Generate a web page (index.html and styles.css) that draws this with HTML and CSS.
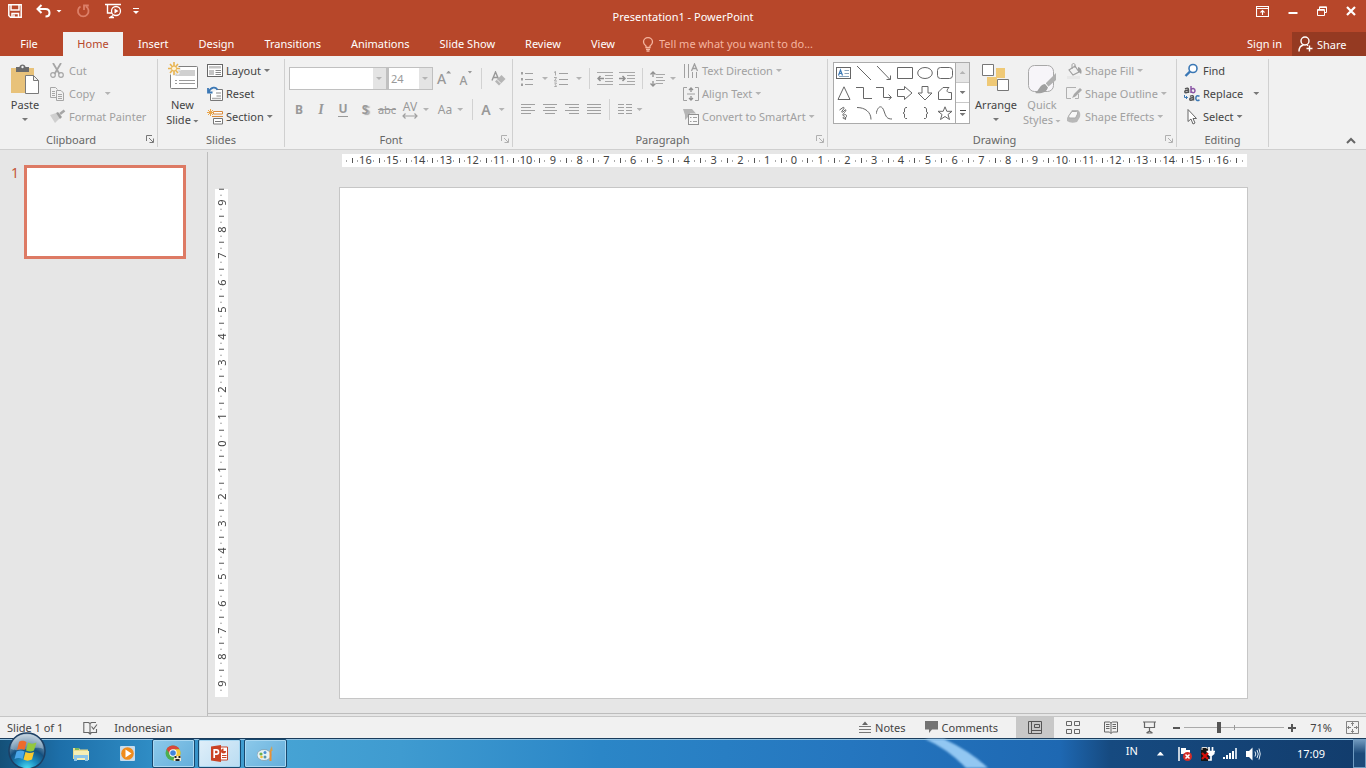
FILE: index.html
```html
<!DOCTYPE html>
<html lang="en">
<head>
<meta charset="utf-8">
<title>Presentation1 - PowerPoint</title>
<link rel="stylesheet" href="styles.css">
</head>
<body>
<div class="app">
<header class="top">
  <div class="titlebar">
    <div class="quick">
      <button class="qa save" aria-label="Save"><svg width="14" height="14" viewBox="0 0 14 14"><path d="M.8 .8H13.2V13.2H2.5L.8 11.5ZM3 1V6H11V1M4 13V9.5H10.500V13M6 10.500V13" fill="none" stroke="#fff" stroke-width="1.500"/></svg></button>
      <button class="qa undo" aria-label="Undo"><svg width="15" height="14" viewBox="0 0 15 14"><path d="M5.500 1L1.500 5L5.500 9M2 5H9.500C12.500 5 13.500 7 13.500 9C13.500 11 12 12.500 9.500 12.500" fill="none" stroke="#fff" stroke-width="2"/></svg><i class="caret"></i></button>
      <button class="qa redo" aria-label="Repeat" disabled><svg width="14" height="14" viewBox="0 0 14 14"><path d="M4.500 2.500A5.300 5.300 0 1 0 10 2.500M8 6V1.500H12.800" fill="none" stroke="#dc7f68" stroke-width="1.800"/></svg></button>
      <button class="qa" aria-label="Start from beginning"><svg width="17" height="16" viewBox="0 0 17 16"><path d="M0 1.500H16M2.500 2V10H7M4 15L8 12.500M5 14.500H9" fill="none" stroke="#fff" stroke-width="1.400"/><circle cx="11" cy="8" r="4.500" fill="#b7472a" stroke="#fff" stroke-width="1.300"/><path d="M9.500 5.500L13.500 8L9.500 10.500Z" fill="#fff"/></svg></button>
      <button class="qa more" aria-label="Customize Quick Access Toolbar"><i class="bar"></i><i class="caret"></i></button>
    </div>
    <h1 class="title">Presentation1 - PowerPoint</h1>
    <div class="winbtns">
      <button aria-label="Ribbon display options"><svg width="13" height="11" viewBox="0 0 13 11"><path d="M.5 .5H12.500V10.500H.5ZM.5 2.500H12.500M6.500 9V4.500M4.500 6.500L6.500 4.500L8.500 6.500" fill="none" stroke="#fff" stroke-width="1.100"/></svg></button>
      <button aria-label="Minimize"><svg width="10" height="11" viewBox="0 0 10 11"><path d="M.5 7H9.500" stroke="#fff" stroke-width="2"/></svg></button>
      <button aria-label="Restore"><svg width="10" height="10" viewBox="0 0 10 10"><path d="M2.500 3V.8H9.500V6.500H7.500M2.500 1.500H9.500M.5 3.500H7.500V9.500H.5ZM.5 4.300H7.500" fill="none" stroke="#fff"/></svg></button>
      <button aria-label="Close"><svg width="10" height="10" viewBox="0 0 10 10"><path d="M1 1L9 9M9 1L1 9" stroke="#fff" stroke-width="2.200"/></svg></button>
    </div>
  </div>
  <nav class="tabs">
    <button class="tab file">File</button>
    <button class="tab active">Home</button>
    <button class="tab">Insert</button>
    <button class="tab">Design</button>
    <button class="tab">Transitions</button>
    <button class="tab">Animations</button>
    <button class="tab">Slide Show</button>
    <button class="tab">Review</button>
    <button class="tab">View</button>
    <label class="tell"><svg width="12" height="15" viewBox="0 0 12 15"><path d="M4 10.500V9C2 7.500 1.500 6.500 1.500 5A4.500 4.300 0 0 1 10.500 5C10.500 6.500 10 7.500 8 9V10.500ZM4 12.300H8M4.500 14H7.500" fill="none" stroke="#f5b5a0" stroke-width="1.300"/></svg><input type="text" placeholder="Tell me what you want to do..."></label>
    <button class="signin">Sign in</button>
    <button class="share"><svg width="15" height="16" viewBox="0 0 15 16"><circle cx="7" cy="5" r="4" fill="none" stroke="#fff" stroke-width="1.400"/><path d="M1 15.500C1 11.500 3 9.500 5.500 9M9 9L10 9.800M11.500 9.500V15.500M8.500 12.500H14.500" fill="none" stroke="#fff" stroke-width="1.400"/></svg>Share</button>
  </nav>
</header>

<section class="ribbon" aria-label="Home ribbon">
  <div class="group g-clip">
    <div class="body">
      <button class="big paste"><svg width="30" height="32" viewBox="0 0 30 32"><path d="M1 4H24V29H1Z" fill="#e8c27a"/><path d="M6 8V3H9.500C9.500 -.5 15.500 -.5 15.500 3H19V8Z" fill="#6b6b6b"/><circle cx="12.500" cy="3" r="1.200" fill="#f1f1f1"/><path d="M15.500 11.500H23.500L28.500 16.500V29.500H15.500ZM23.500 11.500V16.500H28.500" fill="#fff" stroke="#7a7a7a"/></svg><span>Paste</span><i class="caret"></i></button>
      <div class="rows">
        <button class="row" disabled><svg width="16" height="16" viewBox="0 0 16 16"><path d="M3 0L9.500 11M11 0L4.500 11" stroke="#a6a6a6" stroke-width="1.800"/><circle cx="3" cy="12" r="2.300" fill="none" stroke="#a6a6a6" stroke-width="1.200"/><circle cx="11" cy="12" r="2.300" fill="none" stroke="#a6a6a6" stroke-width="1.200"/></svg>Cut</button>
        <button class="row" disabled><svg width="16" height="16" viewBox="0 0 16 16"><path d="M6 11.500H.5V1.500H5.500L7.500 3.500M2 5.500H5M2 7.500H5M2 9.500H5M6.500 4.500H11L13.500 7V14.500H6.500ZM8 8.500H12M8 10.500H12M8 12.500H12" fill="none" stroke="#a6a6a6"/></svg>Copy<i class="caret far"></i></button>
        <button class="row" disabled><svg width="16" height="16" viewBox="0 0 16 16"><path d="M0 6L6 4L10 9L5 14Z" fill="#cfcfcf"/><path d="M6 4L8 3L12 8L10 10Z" fill="#9c9c9c"/><path d="M10 5L14.500 1.500" stroke="#a6a6a6" stroke-width="2.600"/></svg>Format Painter</button>
      </div>
    </div>
    <div class="foot"><span>Clipboard</span><button class="launch" aria-label="Clipboard settings"><svg width="8" height="8" viewBox="0 0 8 8"><path d="M.5 6V.5H6M3 3L7 7M7.500 3.500V7.500H3.500" fill="none" stroke="#777"/></svg></button></div>
  </div>

  <div class="group g-slides">
    <div class="body">
      <button class="big newslide"><svg width="32" height="30" viewBox="0 0 32 30"><rect x="3.500" y="4.500" width="27" height="22" rx="1" fill="#fff" stroke="#808080"/><path d="M8 8H28V14H8Z" fill="#d0d0d0"/><path d="M8 18.500H10M12 18.500H28M8 21.500H10M12 21.500H28" stroke="#9a9a9a"/><path d="M7 0V14M0 7H14M2 2L12 12M12 2L2 12" stroke="#f1f1f1" stroke-width="3"/><path d="M7 0V13M1 6.500H13M3 2L11 11M11 2L3 11" stroke="#e9b44f" stroke-width="1.600"/><circle cx="7" cy="6.500" r="2.500" fill="#fff3d5" stroke="#e9b44f"/></svg><span>New<br>Slide<i class="caret"></i></span></button>
      <div class="rows">
        <button class="row"><svg width="16" height="16" viewBox="0 0 16 16"><rect x=".5" y="1.500" width="15" height="12" fill="#fff" stroke="#666"/><path d="M2 3H14V5.500H2ZM2 7H7V12H2Z" fill="#c4c4c4"/><path d="M8.500 7.500H14M8.500 9.500H14M8.500 11.500H14" stroke="#888"/></svg>Layout<i class="caret"></i></button>
        <button class="row"><svg width="16" height="16" viewBox="0 0 16 16"><path d="M3.500 8V14.500H15.500V3.500H10" fill="#fff" stroke="#777"/><path d="M9 7H14M5 12.500H14M9.500 10H14" stroke="#b0b0b0" stroke-width="1.500"/><path d="M1 2V6.500H5.500M1.500 6C4 .5 9 .5 10.500 4" fill="none" stroke="#3b78b5" stroke-width="1.800"/></svg>Reset</button>
        <button class="row"><svg width="16" height="16" viewBox="0 0 16 16"><path d="M6.500 2.500H15.500V5H6.500Z" fill="#fff" stroke="#d98a3d"/><path d="M5 7.500H16" stroke="#d98a3d"/><path d="M6.500 9.500H15.500V15H6.500ZM8 12.500H14" fill="#fff" stroke="#777"/><path d="M3.500 0V7M0 3.500H7M1 1L6 6M6 1L1 6" stroke="#e9a54a"/></svg>Section<i class="caret"></i></button>
      </div>
    </div>
    <div class="foot"><span>Slides</span></div>
  </div>

  <div class="group g-font">
    <div class="body tools">
      <div class="line">
        <span class="combo name"><select aria-label="Font" disabled><option></option></select><i class="caret"></i></span><span class="combo size"><select aria-label="Font size" disabled><option>24</option></select><i class="caret"></i></span>
        <button class="t" aria-label="Increase font size" disabled><b class="ga">A</b><i class="upcaret"></i></button>
        <button class="t" aria-label="Decrease font size" disabled><b class="gs">A</b><i class="caret raised"></i></button>
        <i class="sep"></i>
        <button class="t wide" aria-label="Clear formatting" disabled><svg width="15" height="16" viewBox="0 0 15 16"><path d="M1 9.500L4.500 1L7.500 8M2.300 6.500H6.500" fill="none" stroke="#999" stroke-width="1.400"/><path d="M10.500 4L14.500 8L8 14.500L4 10.500Z" fill="#b5b5b5"/><path d="M6 8.500L10 12.500" stroke="#f1f1f1"/></svg></button>
      </div>
      <div class="line">
        <button class="t" disabled><b>B</b></button>
        <button class="t ital" disabled><b>I</b></button>
        <button class="t und" disabled><b>U</b></button>
        <button class="t shad" disabled><b>S</b></button>
        <button class="t strike" disabled>abc</button>
        <button class="t split" disabled><span class="av">AV<svg width="16" height="6" viewBox="0 0 16 6"><path d="M1 3H15M3.500 .5L1 3L3.500 5.500M12.500 .5L15 3L12.500 5.500" fill="none" stroke="#a0a0a0" stroke-width="1.200"/></svg></span><i class="caret"></i></button>
        <button class="t split aa" disabled>Aa<i class="caret"></i></button>
        <i class="sep"></i>
        <button class="t split fc" disabled><b>A</b><i class="caret"></i></button>
      </div>
    </div>
    <div class="foot"><span>Font</span><button class="launch" aria-label="Font settings"><svg width="8" height="8" viewBox="0 0 8 8"><path d="M.5 6V.5H6M3 3L7 7M7.500 3.500V7.500H3.500" fill="none" stroke="#b0b0b0"/></svg></button></div>
  </div>

  <div class="group g-para">
    <div class="body">
      <div class="tools">
        <div class="line">
          <button class="t pair" aria-label="Bullets" disabled><svg width="14" height="16" viewBox="0 0 14 16"><path d="M5 2.500H13M5 8.500H13M5 13.500H13" stroke="#a0a0a0"/><path d="M1 1H3V3.500H1ZM1 7H3V9.500H1ZM1 12.500H3V15H1Z" fill="#a0a0a0"/></svg><i class="caret"></i></button>
          <button class="t pair" aria-label="Numbering" disabled><svg width="14" height="16" viewBox="0 0 14 16"><path d="M5 2.500H14M5 8.500H14M5 13.500H14" stroke="#a0a0a0"/><path d="M0 1.500L1.500 .5V4.500M0 6.500H2.500L.5 10H3M.3 12H2.500L1.300 13.500L2.500 15.500H.3" fill="none" stroke="#a0a0a0" stroke-width=".9"/></svg><i class="caret"></i></button>
          <i class="sep"></i>
          <button class="t" aria-label="Decrease indent" disabled><svg width="16" height="14" viewBox="0 0 16 14"><path d="M0 .5H16M8 3.500H16M8 6.500H16M8 9.500H16M0 12.500H16" stroke="#a8a8a8"/><path d="M7 6.500H1M3.500 4L1 6.500L3.500 9" fill="none" stroke="#909090" stroke-width="1.500"/></svg></button>
          <button class="t" aria-label="Increase indent" disabled><svg width="16" height="14" viewBox="0 0 16 14"><path d="M0 .5H16M8 3.500H16M8 6.500H16M8 9.500H16M0 12.500H16" stroke="#a8a8a8"/><path d="M0 6.500H6M3.500 4L6 6.500L3.500 9" fill="none" stroke="#909090" stroke-width="1.500"/></svg></button>
          <i class="sep"></i>
          <button class="t split spacing" aria-label="Line spacing" disabled><svg width="15" height="16" viewBox="0 0 15 16"><path d="M6 3.500H15M6 6.500H13M6 9.500H15M6 12.500H13" stroke="#a8a8a8"/><path d="M3 1V6M3 10V15M.5 3.500L3 1L5.500 3.500M.5 12.500L3 15L5.500 12.500" fill="none" stroke="#909090" stroke-width="1.300"/></svg><i class="caret"></i></button>
        </div>
        <div class="line">
          <button class="t" aria-label="Align left" disabled><svg width="14" height="11" viewBox="0 0 14 11"><path d="M0 .5H14M0 3.500H10M0 6.500H14M0 9.500H10" stroke="#a0a0a0"/></svg></button>
          <button class="t" aria-label="Center" disabled><svg width="14" height="11" viewBox="0 0 14 11"><path d="M0 .5H14M2 3.500H12M0 6.500H14M2 9.500H12" stroke="#a0a0a0"/></svg></button>
          <button class="t" aria-label="Align right" disabled><svg width="14" height="11" viewBox="0 0 14 11"><path d="M0 .5H14M4 3.500H14M0 6.500H14M4 9.500H14" stroke="#a0a0a0"/></svg></button>
          <button class="t" aria-label="Justify" disabled><svg width="14" height="11" viewBox="0 0 14 11"><path d="M0 .5H14M0 3.500H14M0 6.500H14M0 9.500H14" stroke="#a0a0a0"/></svg></button>
          <i class="sep"></i>
          <button class="t split cols" aria-label="Columns" disabled><svg width="14" height="11" viewBox="0 0 14 11"><path d="M0 .5H6M8 .5H14M0 3.500H6M8 3.500H14M0 6.500H6M8 6.500H14M0 9.500H6M8 9.500H14" stroke="#a0a0a0"/></svg><i class="caret"></i></button>
        </div>
      </div>
      <div class="rows">
        <button class="row" disabled><svg width="16" height="16" viewBox="0 0 16 16"><path d="M1.500 1V15M5.500 1V15M9.500 9V15M13.500 9V15" stroke="#a0a0a0"/><path d="M8.500 8L11.500 1L14.500 8M9.500 5.500H13.500" fill="none" stroke="#a0a0a0" stroke-width="1.300"/></svg>Text Direction<i class="caret"></i></button>
        <button class="row" disabled><svg width="16" height="16" viewBox="0 0 16 16"><path d="M4 1.500H.5V14.500H4M12 1.500H15.500V14.500H12M4 8H12" fill="none" stroke="#a0a0a0"/><path d="M8 6V2M6 4L8 2L10 4M8 10V14M6 12L8 14L10 12" fill="none" stroke="#909090" stroke-width="1.300"/></svg>Align Text<i class="caret"></i></button>
        <button class="row" disabled><svg width="16" height="16" viewBox="0 0 16 16"><path d="M0 0H9L13 4.500H7V8H5L2 11V6Z" fill="#b5b5b5"/><rect x="5.500" y="5.500" width="10" height="10" fill="#f8f8f8" stroke="#909090"/><path d="M7 8.500H8.500M10 8.500H14M7 12.500H8.500M10 12.500H14" stroke="#a0a0a0"/></svg>Convert to SmartArt<i class="caret"></i></button>
      </div>
    </div>
    <div class="foot"><span>Paragraph</span><button class="launch" aria-label="Paragraph settings"><svg width="8" height="8" viewBox="0 0 8 8"><path d="M.5 6V.5H6M3 3L7 7M7.500 3.500V7.500H3.500" fill="none" stroke="#b0b0b0"/></svg></button></div>
  </div>

  <div class="group g-draw">
    <div class="body">
      <div class="gallery">
        <div class="shapes">
          <button aria-label="Text box"><svg viewBox="0 0 16 14"><rect x=".5" y="1.500" width="14" height="11" fill="#fff" stroke="#666"/><path d="M2.500 9.500L4.500 4L6.500 9.500M3.200 7.500H5.800" fill="none" stroke="#3b78b5" stroke-width="1.200"/><path d="M8.500 4.500H13M8.500 7.500H13M3 10.500H13" stroke="#8ca4bc"/></svg></button>
          <button aria-label="Line"><svg viewBox="0 0 16 14"><path d="M1 0L15 14"/></svg></button>
          <button aria-label="Arrow"><svg viewBox="0 0 16 14"><path d="M1 0L14 13.500M14.500 9.500V13.500H10.500"/></svg></button>
          <button aria-label="Rectangle"><svg viewBox="0 0 16 14"><path d="M.5 1.500H15.500V12.500H.5Z"/></svg></button>
          <button aria-label="Oval"><svg viewBox="0 0 16 14"><ellipse cx="8" cy="7" rx="7.300" ry="5.500"/></svg></button>
          <button aria-label="Rounded rectangle"><svg viewBox="0 0 16 14"><rect x=".5" y="1.500" width="15" height="11" rx="3"/></svg></button>
          <button aria-label="Triangle"><svg viewBox="0 0 16 14"><path d="M8 .8L14 13.500H2Z"/></svg></button>
          <button aria-label="Elbow connector"><svg viewBox="0 0 16 14"><path d="M0 1.500H7.500V12.500H16"/></svg></button>
          <button aria-label="Elbow arrow"><svg viewBox="0 0 16 14"><path d="M0 1.500H7.500V11.500H15M12.500 8.500L15.500 11.500L12.500 14"/></svg></button>
          <button aria-label="Right arrow"><svg viewBox="0 0 16 14"><path d="M.5 3.500H7.500V.5L15 7L7.500 13.500V10.500H.5Z"/></svg></button>
          <button aria-label="Down arrow"><svg viewBox="0 0 16 14"><path d="M5 .5H11V7H15L8 14L1 7H5Z"/></svg></button>
          <button aria-label="Freeform"><svg viewBox="0 0 16 14"><path d="M1.500 13.500V6L6 1.500H12C8.500 5 10 7 14.500 6.500V13.500Z"/></svg></button>
          <button aria-label="Scribble"><svg viewBox="0 0 16 14"><path d="M3.500 4L7 1.500C9 1 8 3 6 5C5 7 7 6.500 9 4C10.500 3 10 5 8.500 6.500C7 8.500 6 9 7 9.500C9 8 11 8.500 10.500 10.500C9 13.500 6 13 7.500 11C9 10 10.500 12 9 14"/></svg></button>
          <button aria-label="Arc"><svg viewBox="0 0 16 14"><path d="M1 1.500C9 1.500 15 6 15 13.500"/></svg></button>
          <button aria-label="Curve"><svg viewBox="0 0 16 14"><path d="M0 8C2-1 6-1 8 5C10 11 11 13 16 13"/></svg></button>
          <button aria-label="Left brace"><svg viewBox="0 0 16 14"><path d="M10 1.500H8.500L7.500 3V6L6 7L7.500 8V11.500L8.500 12.500H10"/></svg></button>
          <button aria-label="Right brace"><svg viewBox="0 0 16 14"><path d="M7 1.500H8.500L9.500 3V6L11 7L9.500 8V11.500L8.500 12.500H7"/></svg></button>
          <button aria-label="Star"><svg viewBox="0 0 16 14"><path d="M8 .8L9.800 5.300H15L11 8.500L12.500 13.500L8 10.500L3.500 13.500L5 8.500L1 5.300H6.200Z"/></svg></button>
        </div>
        <div class="scroller">
          <button aria-label="Previous shapes" disabled><i class="upcaret"></i></button>
          <button aria-label="Next shapes"><i class="caret"></i></button>
          <button aria-label="More shapes"><i class="bar"></i><i class="caret"></i></button>
        </div>
      </div>
      <button class="big arrange"><svg width="28" height="28" viewBox="0 0 28 28"><path d="M14 5H23V15H14ZM5 14H15V23H5Z" fill="#efc976"/><path d="M.5 1.500H11.500V12.500H.5ZM15.500 16.500H26.500V27.500H15.500Z" fill="#fff" stroke="#777"/></svg><span>Arrange</span><i class="caret"></i></button>
      <button class="big quickst" disabled><svg width="30" height="31" viewBox="0 0 30 31"><rect x="1.500" y="2.500" width="25" height="26" rx="6" fill="#f7f5f9" stroke="#a8a8a8"/><path d="M29 10V17L21 24L18 21Z" fill="#b0b0b0"/><path d="M18 21L21 24C20 30 13 31 8 30C12 28 12 22 18 21Z" fill="#a0a0a0"/><path d="M18 20L22 25" stroke="#fff"/></svg><span>Quick<br>Styles<i class="caret"></i></span></button>
      <div class="rows tight">
        <button class="row" disabled><svg width="17" height="16" viewBox="0 0 17 16"><path d="M3 7L9 3L13 9L7 12Z" fill="none" stroke="#a0a0a0" stroke-width="1.200"/><path d="M6 6V2C6 0 9 0 9 2V5" fill="none" stroke="#a0a0a0"/><path d="M12 4C16 5 16 9 15 11L12 8Z" fill="#a0a0a0"/><path d="M1 13H14V16H1Z" fill="#e8e8e8"/></svg>Shape Fill<i class="caret"></i></button>
        <button class="row" disabled><svg width="17" height="16" viewBox="0 0 17 16"><path d="M10 1.500H.5V12.500H5M12.500 8V12.500H9" fill="none" stroke="#b0b0b0"/><path d="M14 2L8 8L6 12L9.500 10.500L16 4Z" fill="#a8a8a8"/></svg>Shape Outline<i class="caret"></i></button>
        <button class="row" disabled><svg width="17" height="16" viewBox="0 0 17 16"><path d="M6 1H12Q15 3 14 8L11 13Q5 15 1 12V9Z" fill="#b8b8b8"/><path d="M6 2.500H10.500Q12.500 2.500 11.500 5L9.500 9H4Q1.500 9 3 6.500Z" fill="#f8f8f8" stroke="#aaa"/></svg>Shape Effects<i class="caret"></i></button>
      </div>
    </div>
    <div class="foot"><span>Drawing</span><button class="launch" aria-label="Drawing settings"><svg width="8" height="8" viewBox="0 0 8 8"><path d="M.5 6V.5H6M3 3L7 7M7.500 3.500V7.500H3.500" fill="none" stroke="#b0b0b0"/></svg></button></div>
  </div>

  <div class="group g-edit">
    <div class="body">
      <div class="rows">
        <button class="row"><svg width="16" height="16" viewBox="0 0 16 16"><circle cx="9" cy="5.500" r="4" fill="#fff" stroke="#3b78b5" stroke-width="1.600"/><path d="M6 8.500L1.500 13" stroke="#3b78b5" stroke-width="2.400"/></svg>Find</button>
        <button class="row"><svg width="16" height="16" viewBox="0 0 16 16" fill="none" stroke-width="1.500"><path d="M1 2.800Q4.500 1 4.500 4V7M4.500 4.300Q.8 4 .8 5.800Q1 7.500 4.500 5.800" stroke="#555"/><path d="M7 -.5V7M7 4.500Q7.500 2.200 9.300 2.500Q11 3 11 4.700Q10.800 7 8.500 6.600L7 5.500" stroke="#8b56a5"/><path d="M6 10.300Q9.500 8.500 9.500 11.500V14.500M9.500 11.800Q5.800 11.500 5.800 13.300Q6 15 9.500 13.300" stroke="#555"/><path d="M15.500 10.300Q12 8.800 11.800 12.200Q12 15.500 15.500 14" stroke="#3b78b5"/><path d="M.5 9V11.500H3.500M2 10L3.500 11.500L2 13" stroke="#3b78b5" stroke-width="1"/></svg>Replace<i class="caret far"></i></button>
        <button class="row"><svg width="16" height="16" viewBox="0 0 16 16"><path d="M4 .5V12.500L7 10L9 15L11 14L9 9.500H12.500Z" fill="#fff" stroke="#666"/></svg>Select<i class="caret"></i></button>
      </div>
    </div>
    <div class="foot"><span>Editing</span></div>
  </div>
  <button class="collapse" aria-label="Collapse the Ribbon"><svg width="10" height="7" viewBox="0 0 10 7"><path d="M1 6L5 2L9 6" fill="none" stroke="#666" stroke-width="2"/></svg></button>
</section>

<main class="work">
  <aside class="thumbs"><span class="num">1</span><button class="thumb" aria-label="Slide 1"></button></aside>
  <section class="editor">
    <ol class="vruler"><li>9</li><li>8</li><li>7</li><li>6</li><li>5</li><li>4</li><li>3</li><li>2</li><li>1</li><li>0</li><li>1</li><li>2</li><li>3</li><li>4</li><li>5</li><li>6</li><li>7</li><li>8</li><li>9</li></ol>
    <div class="stage">
      <ol class="hruler"><li>16</li><li>15</li><li>14</li><li>13</li><li>12</li><li>11</li><li>10</li><li>9</li><li>8</li><li>7</li><li>6</li><li>5</li><li>4</li><li>3</li><li>2</li><li>1</li><li>0</li><li>1</li><li>2</li><li>3</li><li>4</li><li>5</li><li>6</li><li>7</li><li>8</li><li>9</li><li>10</li><li>11</li><li>12</li><li>13</li><li>14</li><li>15</li><li>16</li></ol>
      <div class="slide"></div>
    </div>
  </section>
</main>

<footer class="status">
  <span class="count">Slide 1 of 1</span>
  <button class="proof" aria-label="Spelling"><svg width="15" height="14" viewBox="0 0 15 14"><path d="M7 2.500V13L5.500 11.500H.8V1.500H5.500L7 2.500L8.500 1.500H13M7 13L8.500 11.500H13.500V8M8.500 5.500L10.500 8L14 3.500" fill="none" stroke="#666" stroke-width="1.100"/></svg></button>
  <button class="lang">Indonesian</button>
  <div class="right">
    <button class="notes"><svg width="12" height="12" viewBox="0 0 12 12"><path d="M6 .5L9 4H3Z" fill="#666"/><path d="M0 5.500H12M0 8.500H12M0 11.500H12" stroke="#777"/></svg>Notes</button>
    <button class="comments"><svg width="13" height="12" viewBox="0 0 13 12"><path d="M0 0H13V8.500H7L4 12V8.500H0Z" fill="#737373"/></svg>Comments</button>
    <button class="view on" aria-label="Normal"><svg width="14" height="13" viewBox="0 0 14 13"><path d="M.5 .5H13.500V12.500H.5ZM3.500 .5V12.500M3.500 9.500H13.500M6.500 3.500H11.500V6.500H6.500Z" fill="none" stroke="#555"/></svg></button>
    <button class="view" aria-label="Slide sorter"><svg width="14" height="13" viewBox="0 0 14 13"><path d="M.5 .5H5.500V4.500H.5ZM8.500 .5H13.500V4.500H8.500ZM.5 8.500H5.500V12.500H.5ZM8.500 8.500H13.500V12.500H8.500Z" fill="none" stroke="#666"/></svg></button>
    <button class="view" aria-label="Reading view"><svg width="14" height="13" viewBox="0 0 14 13"><path d="M7 2V12.500M.5 1H5.500L7 2L8.500 1H13.500V11H8.500L7 12.500L5.500 11H.5ZM2 3.500H5.500M2 5.500H5.500M2 7.500H5.500M8.500 3.500H12M8.500 5.500H12M8.500 7.500H12" fill="none" stroke="#666"/></svg></button>
    <button class="view" aria-label="Slide show"><svg width="13" height="13" viewBox="0 0 13 13"><path d="M0 1H13M1.500 1.500V6.500H11.500V1.500M6.500 7V11M3.500 12L6.500 10L9.500 12M3.500 12H9.500" fill="none" stroke="#666" stroke-width="1.200"/></svg></button>
    <button class="zbtn" aria-label="Zoom out"><svg width="7" height="8" viewBox="0 0 7 8"><path d="M0 4H7" stroke="#555" stroke-width="2"/></svg></button>
    <input class="zoom" type="range" min="0" max="100" value="34" aria-label="Zoom">
    <button class="zbtn" aria-label="Zoom in"><svg width="8" height="8" viewBox="0 0 8 8"><path d="M0 4H8M4 0V8" stroke="#555" stroke-width="2"/></svg></button>
    <button class="pct">71%</button>
    <button class="fit" aria-label="Fit slide to window"><svg width="13" height="13" viewBox="0 0 13 13"><path d="M.5 .5H12.500V12.500H.5ZM6.500 1.500V5M6.500 8V11.500M1.500 6.500H5M8 6.500H11.500M5 3L6.500 1.500L8 3M5 10L6.500 11.500L8 10M3 5L1.500 6.500L3 8M10 5L11.500 6.500L10 8" fill="none" stroke="#777" stroke-width=".9"/></svg></button>
  </div>
</footer>

<nav class="taskbar" aria-label="Taskbar">
  <svg class="glow" viewBox="0 0 1366 29" preserveAspectRatio="none"><path d="M925 0H944Q970 12 988 29H966Q948 10 925 0Z" fill="#9fd0f8" opacity=".9"/></svg>
  <button class="start" aria-label="Start"><svg width="38" height="38" viewBox="0 0 38 38">
    <defs><radialGradient id="orb" cx=".5" cy="1" r=".95"><stop offset="0" stop-color="#4fe0f5"/><stop offset=".3" stop-color="#1b8ec2"/><stop offset=".6" stop-color="#15507f"/><stop offset="1" stop-color="#a9bfd0"/></radialGradient></defs>
    <circle cx="19" cy="19" r="18" fill="url(#orb)" stroke="#1d3f63" stroke-width="1.500"/>
    <path d="M3 17C3 7 11 2.500 19 2.500S35 7 35 17C27 13 11 21 3 17Z" fill="#fff" opacity=".3"/>
    <path d="M11 10C14 8 16 9 18.500 10L16.500 18C14 17 12 16.500 9 18Z" fill="#ee6a2c"/><path d="M20 10.500C23 12 25 12 28.500 10.500L26 18.500C23 20 21 19.500 18 18.500Z" fill="#93c83e"/><path d="M8.500 19.500C12 18 14 18.500 16.500 19.500L14.500 27C12 26 10 25.500 6.500 27Z" fill="#4aa6e8"/><path d="M17.500 20C21 21.500 23 21 26 20L24 27.500C21 29 18 29 15.500 27.500Z" fill="#fbc92e"/></svg></button>
  <button class="task" aria-label="File Explorer"><svg width="18" height="16" viewBox="0 0 18 16"><path d="M1 2H7L8 3.500H16V13H1Z" fill="#e9dc8d"/><path d="M2 5H17V14H2Z" fill="#f7efb5"/><path d="M3 3H7" stroke="#58ad4c" stroke-width="1.500"/><path d="M2 15V9H16V15H13V12H5V15Z" fill="#8dc6ea"/></svg></button>
  <button class="task" aria-label="Media Player"><svg width="15" height="15" viewBox="0 0 15 15"><rect width="15" height="15" rx="1" fill="#c7dced"/><circle cx="7.500" cy="7.500" r="6.300" fill="#f08c1d"/><path d="M5.500 3.500L11.500 7.500L5.500 11.500Z" fill="#fff"/></svg></button>
  <div class="running">
  <button class="open" aria-label="Chrome"><svg width="17" height="17" viewBox="0 0 17 17"><circle cx="8" cy="8" r="7.500" fill="#4dae50"/><path d="M1.500 4.200A7.500 7.500 0 0 1 14.500 4.200L8 4.500L5 9Z" fill="#d9483b"/><path d="M14.500 4.200A7.500 7.500 0 0 1 8 15.500L11 9L9 4.300Z" fill="#f4c63a"/><circle cx="8" cy="8" r="3.700" fill="#fff"/><circle cx="8" cy="8" r="2.800" fill="#3f83dc"/><path d="M9 11H16V16H9Z" fill="#f5ead2"/><path d="M9.500 11H11.500V13H9.500ZM13.500 11H15.500V13H13.500ZM10.500 14H14.500V16H10.500Z" fill="#222"/></svg></button>
  <button class="open current" aria-label="PowerPoint"><svg width="17" height="17" viewBox="0 0 17 17"><path d="M8 2H16.500V15H8Z" fill="#fff" stroke="#c8452a"/><path d="M0 1.500L10 0V17L0 15.500Z" fill="#ca4324"/><circle cx="12.500" cy="6" r="2.500" fill="#ca4324"/><path d="M12.500 6V3H15.500V6Z" fill="#fff"/><path d="M11 10.500H15.500M11 12.500H15.500" stroke="#ca4324"/><path d="M3.200 13V4.800H5.500C8.200 4.800 8.200 9.200 5.500 9.200H3.200" fill="none" stroke="#fff" stroke-width="1.700"/></svg></button>
  <button class="open" aria-label="Paint"><svg width="17" height="16" viewBox="0 0 17 16"><ellipse cx="7" cy="9" rx="7" ry="5.500" fill="#e5f1f5" stroke="#7896a6" stroke-width=".7"/><circle cx="4" cy="8" r="1.600" fill="#6ab04e"/><circle cx="8" cy="6.500" r="1.500" fill="#4b8fd0"/><circle cx="4.500" cy="11" r="1.300" fill="#f1bf38"/><circle cx="8" cy="11" r="1.500" fill="#5795a8"/><path d="M13.500 5V15" stroke="#ea9034" stroke-width="2"/><path d="M12.500 5L15 0L15.500 5Z" fill="#d4a04d"/></svg></button>
  </div>
  <div class="tray">
    <span class="ime">IN</span>
    <button aria-label="Show hidden icons"><i class="upcaret"></i></button>
    <button aria-label="Action Center"><svg width="16" height="16" viewBox="0 0 16 16"><path d="M2 1V15" stroke="#fff" stroke-width="1.500"/><path d="M4 2H9V4H13V10H8V8H4Z" fill="#fff"/><circle cx="10.500" cy="10.500" r="4.500" fill="#d52d28"/><path d="M8.500 8.500L12.500 12.500M12.500 8.500L8.500 12.500" stroke="#fff" stroke-width="1.500"/></svg></button>
    <button aria-label="Power"><svg width="14" height="16" viewBox="0 0 14 16"><path d="M0 2H8V15H0Z" fill="#151515"/><path d="M1 4V1.500H6V3" fill="none" stroke="#ddd"/><path d="M8 1V5M11.500 1V5M5.500 5.500H14M10 9V14H7" stroke="#fff" stroke-width="1.700" fill="none"/><path d="M6 5H13.500V8L11 10H8.500L6 8Z" fill="#fff"/><path d="M1 7L7 13M7 7L1 13" stroke="#d5100b" stroke-width="2.300"/></svg></button>
    <button aria-label="Network"><svg width="15" height="13" viewBox="0 0 15 13"><path d="M1 10V12M4 8V12M7 6V12M10 4V12" stroke="#fff" stroke-width="2"/><path d="M13 1V12" stroke="#c5d5e5" stroke-width="2"/></svg></button>
    <button aria-label="Volume"><svg width="15" height="14" viewBox="0 0 15 14"><path d="M0 4H3L6.500 .5V13.500L3 10H0Z" fill="#fff"/><path d="M9 4.500Q10.500 7 9 9.500M11 3Q13.500 7 11 11M13 1.500Q15.500 7 13 12.500" fill="none" stroke="#e0ebf5"/></svg></button>
    <time class="clock">17:09</time>
    <button class="desk" aria-label="Show desktop"></button>
  </div>
</nav>
</div>
</body>
</html>
```
FILE: styles.css
```css
* { box-sizing: border-box; }
html, body { margin: 0; height: 100%; }
body {
  font-family: "Noto Sans", "Open Sans", sans-serif;
  font-size: 11px;
  line-height: 15px;
  color: #444;
  background: #e6e6e6;
}
button, input, select {
  font: inherit; color: inherit; margin: 0; padding: 0;
  border: 0; background: none; border-radius: 0;
}
button { display: flex; align-items: center; justify-content: center; white-space: nowrap; }
svg { display: block; flex: none; }
ol { list-style: none; margin: 0; padding: 0; }

.app { display: flex; flex-direction: column; min-height: 100vh; }

.caret, .upcaret {
  flex: none; width: 6px; height: 3px; background: #777;
  clip-path: polygon(0 0, 100% 0, 50% 100%);
}
.upcaret { clip-path: polygon(50% 0, 100% 100%, 0 100%); }
:disabled .caret, :disabled .upcaret, .combo .caret { background: #b4b4b4; }
.bar { width: 6px; height: 1px; background: currentColor; }

/* title bar and tabs */
.top { background: #b7472a; color: #fff; }
.titlebar { display: grid; grid-template-columns: 1fr auto 1fr; height: 32px; }
.quick { display: flex; align-items: center; height: 22px; padding-left: 8px; }
.qa .caret { background: #fff; margin-left: 5px; }
.save { margin-right: 14px; }
.undo { margin-right: 14px; }
.redo { margin-right: 15px; }
.more { flex-direction: column; gap: 2px; margin-left: 11px; }
.more .caret { margin: 0; }
.title { margin: 0; font-size: 11px; font-weight: 400; line-height: 33px; }
.winbtns { display: flex; align-items: center; justify-content: flex-end; height: 22px; gap: 19px; padding-right: 10px; }
.tabs { display: flex; height: 24px; }
.tab, .signin { padding: 0 15px 2px; }
.tab.file { width: 58px; margin-right: 5px; }
.tab.active { background: #f1f1f1; color: #b7472a; width: 60px; }
.tell { display: flex; align-items: center; flex: 1; gap: 5px; margin-left: 12px; }
.tell input { flex: 1; color: #f5b5a0; outline: 0; padding-bottom: 2px; }
.tell input::placeholder { color: #f5b5a0; opacity: 1; }
.signin { padding: 0 10px 2px; }
.share { background: #953a22; width: 74px; justify-content: flex-start; gap: 4px; padding-left: 6px; }

/* ribbon */
.ribbon { display: flex; background: #f1f1f1; border-bottom: 1px solid #cfcfcf; padding-top: 3px; }
.group { display: flex; flex-direction: column; flex: none; border-right: 1px solid #d0d0d0; margin-bottom: 2px; }
.body { display: flex; height: 72px; }
.foot { display: flex; align-items: center; height: 16px; color: #666; }
.foot span { flex: 1; text-align: center; }
.launch { width: 15px; height: 16px; }
.g-clip { width: 158px; }
.g-slides { width: 127px; }
.g-font { width: 228px; }
.g-para { width: 315px; }
.g-draw { width: 349px; }
.g-edit { width: 92px; }

.big { flex-direction: column; justify-content: flex-start; color: #444; }
.big > span { display: block; text-align: center; }
.big > .caret { margin-top: 6px; }
.big span .caret { display: inline-block; margin-left: 2px; vertical-align: middle; }
:disabled { color: #a0a0a0; }
.big:disabled { color: #a0a0a0; }
.paste { width: 50px; padding-top: 5px; }
.paste > span { margin-top: 1px; }
.newslide { width: 49px; padding-top: 3px; }
.newslide > span { margin-top: 5px; }
.rows { display: flex; flex-direction: column; align-items: flex-start; }
.row { height: 23px; gap: 3px; }
.row .far { margin-left: 7px; }
.tight .row svg { margin-right: -1px; }

.tools { display: flex; flex-direction: column; gap: 8px; padding-top: 8px; }
.line { display: flex; align-items: center; height: 23px; }
.t { width: 22px; height: 22px; font-size: 12px; color: #999; }
.split { width: 35px; gap: 5px; }
.split.cols, .split.spacing { width: 32px; }
.pair { width: 34px; gap: 8px; }
.sep { width: 1px; height: 21px; background: #d2d2d2; margin: 0 4px; }
.g-font .tools { padding-left: 4px; }
.g-font .line + .line { margin-left: -1px; }
.combo { position: relative; display: flex; height: 23px; border: 1px solid #c0c0c0; background: #e4e4e4; padding-right: 13px; }
.combo select { appearance: none; width: 100%; background: #fff; color: #999; opacity: 1; padding-left: 2px; }
.combo .caret { position: absolute; right: 4px; top: 9px; }
.name { width: 98px; }
.size { width: 46px; border-left-width: 2px; }
.ga { font-size: 14px; font-weight: 500; }
.gs { font-size: 12px; font-weight: 500; padding-top: 3px; }
.t > .upcaret, .t > .raised { align-self: flex-start; margin-top: 3px; width: 5px; background: #999; }
.wide { width: 24px; }
.ital { font-family: "Liberation Serif", serif; font-style: italic; font-size: 14px; }
.und b { border-bottom: 1px solid #999; line-height: 14px; }
.shad b { text-shadow: 2px 1px 1px #aaa; }
.strike { text-decoration: line-through; font-size: 11px; }
.av { display: flex; flex-direction: column; align-items: center; line-height: 12px; }
.fc b { font-size: 14px; font-weight: 600; }
.fc { width: 32px; gap: 8px; }

.g-para .tools { padding-left: 4px; width: 170px; }

.gallery { display: flex; margin: 3px 0 0 5px; width: 137px; height: 62px; border: 1px solid #ababab; background: #fff; }
.shapes { flex: 1; display: grid; grid-template-columns: repeat(6, 1fr); }
.shapes button svg { width: 16px; height: 14px; fill: none; stroke: #666; }
.scroller { display: grid; grid-template-rows: repeat(3, 1fr); width: 14px; border-left: 1px solid #ababab; }
.scroller button { flex-direction: column; gap: 2px; border-bottom: 1px solid #c8c8c8; }
.scroller button:last-child { border-bottom: 0; }
.scroller button:disabled { background: #e6e6e6; }
.arrange { width: 52px; padding-top: 4px; }
.arrange > span { margin-top: 6px; }
.quickst { width: 40px; padding-top: 4px; margin-right: 4px; }
.quickst > span { margin-top: 3px; }
.g-edit .rows { padding-left: 7px; }
.collapse { margin-left: auto; align-self: flex-end; padding: 4px 10px 5px; }

/* work area */
.work { display: flex; flex: 1; }
.thumbs { display: flex; align-items: flex-start; width: 208px; border-right: 1px solid #bdbdbd; padding: 13px 21px 0 11px; margin-top: 2px; }
.num { font-size: 14px; color: #c4563b; width: 13px; line-height: 16px; }
.thumb { flex: 1; aspect-ratio: 162 / 94; background: #fff; border: 3px solid #dd7a64; }
.editor { display: flex; flex: 1; border-bottom: 1px solid #bdbdbd; margin-bottom: 2px; padding: 4px 118px 14px 7px; gap: 111px; }
.stage { display: flex; flex-direction: column; flex: 1; gap: 20px; }
.slide { flex: 1; background: #fff; border: 1px solid #c6c6c6; }
.hruler, .vruler { display: flex; background-color: #fff; background-repeat: no-repeat; }
.hruler {
  height: 13px; margin: 0 1px 0 3px; padding: 0 10px; line-height: 12px;
  background-image: linear-gradient(#aaa, #aaa), linear-gradient(#aaa, #aaa);
  background-position: 4px 6px, right 4px top 6px;
  background-size: 1px 2px;
}
.hruler li {
  flex: 1; text-align: center; min-width: 0;
  background:
    linear-gradient(#555, #555) 0 4px / 1px 5px no-repeat,
    linear-gradient(#aaa, #aaa) 5px 6px / 1px 2px no-repeat,
    linear-gradient(#aaa, #aaa) 21px 6px / 1px 2px no-repeat;
}
.hruler li:last-child { border-right: 1px solid #555; border-image: linear-gradient(transparent 4px, #555 4px 9px, transparent 9px) 1; }
.vruler { flex-direction: column; width: 13px; margin: 35px 0 2px; }
.vruler li {
  flex: 1; display: flex; align-items: center; justify-content: center;
  writing-mode: vertical-rl; transform: rotate(180deg); line-height: 13px; min-height: 0;
  background:
    linear-gradient(#555, #555) 4px 100% / 5px 1px no-repeat,
    linear-gradient(#aaa, #aaa) 6px 6px / 2px 1px no-repeat,
    linear-gradient(#aaa, #aaa) 6px 20px / 2px 1px no-repeat;
}

/* status bar */
.status { display: flex; align-items: center; height: 22px; background: #f1f1f1; border-top: 1px solid #c6c6c6; padding-left: 7px; }
.count, .lang, .notes, .comments, .pct { padding-bottom: 1px; }
.proof { margin: 0 16px 0 20px; }
.right { display: flex; align-items: center; height: 100%; margin-left: auto; padding-right: 7px; }
.notes, .comments { gap: 4px; }
.comments { margin: 0 18px 0 19px; }
.view { width: 38px; height: 100%; }
.view.on { background: #c8c8c8; }
.zbtn { width: 9px; }
.view + .zbtn { margin-left: 4px; }
.zoom {
  appearance: none; width: 100px; height: 12px; margin: 0 3px;
  background: linear-gradient(#999, #999) 50% 50% / 1px 5px no-repeat, linear-gradient(#aaa, #aaa) 0 50% / 100% 1px no-repeat;
}
.zoom::-webkit-slider-thumb { appearance: none; width: 4px; height: 11px; background: #555; }
.pct { width: 50px; }

/* taskbar */
.taskbar {
  position: relative; display: flex; height: 30px; color: #fff;
  background: linear-gradient(90deg, #145078 0, #1d6fa9 60px, #2f8cc4 150px, #46a3d4 280px, #3f9bd0 400px, #2b86c7 600px, #2576bf 850px, #1e68b2 1060px, #164a80 1110px, #123c6c 100%);
  border-top: 1px solid #1a3c5c; box-shadow: inset 0 1px #8fc0e0;
}
.glow { position: absolute; inset: 0; width: 100%; height: 100%; filter: blur(1px); }
.start { align-self: flex-end; width: 38px; height: 38px; margin: -8px 12px -2px 8px; position: relative; }
.task { position: relative; width: 46px; }
.running { position: relative; display: flex; gap: 3px; margin-left: 2px; }
.open { width: 43px; border: 1px solid #17486e; border-radius: 2px; background: linear-gradient(135deg, #8cc9ea, #64aedb); box-shadow: inset 0 0 0 1px #a9d8f2; }
.open.current { background: linear-gradient(135deg, #e0eff9, #b9dcf2); }
.tray { position: relative; display: flex; align-items: center; margin-left: auto; height: 100%; }
.tray button { margin-left: 8px; }
.ime { margin-right: 11px; padding-bottom: 6px; }
.tray .upcaret { width: 7px; height: 4px; margin-right: 5px; background: #fff; }
.clock { margin: 0 28px 0 36px; }
.tray .desk { width: 13px; height: 29px; margin: 0; border: 1px solid #6f9cc2; background: linear-gradient(#6f98bd, #1c4a7a 50%); }
```
